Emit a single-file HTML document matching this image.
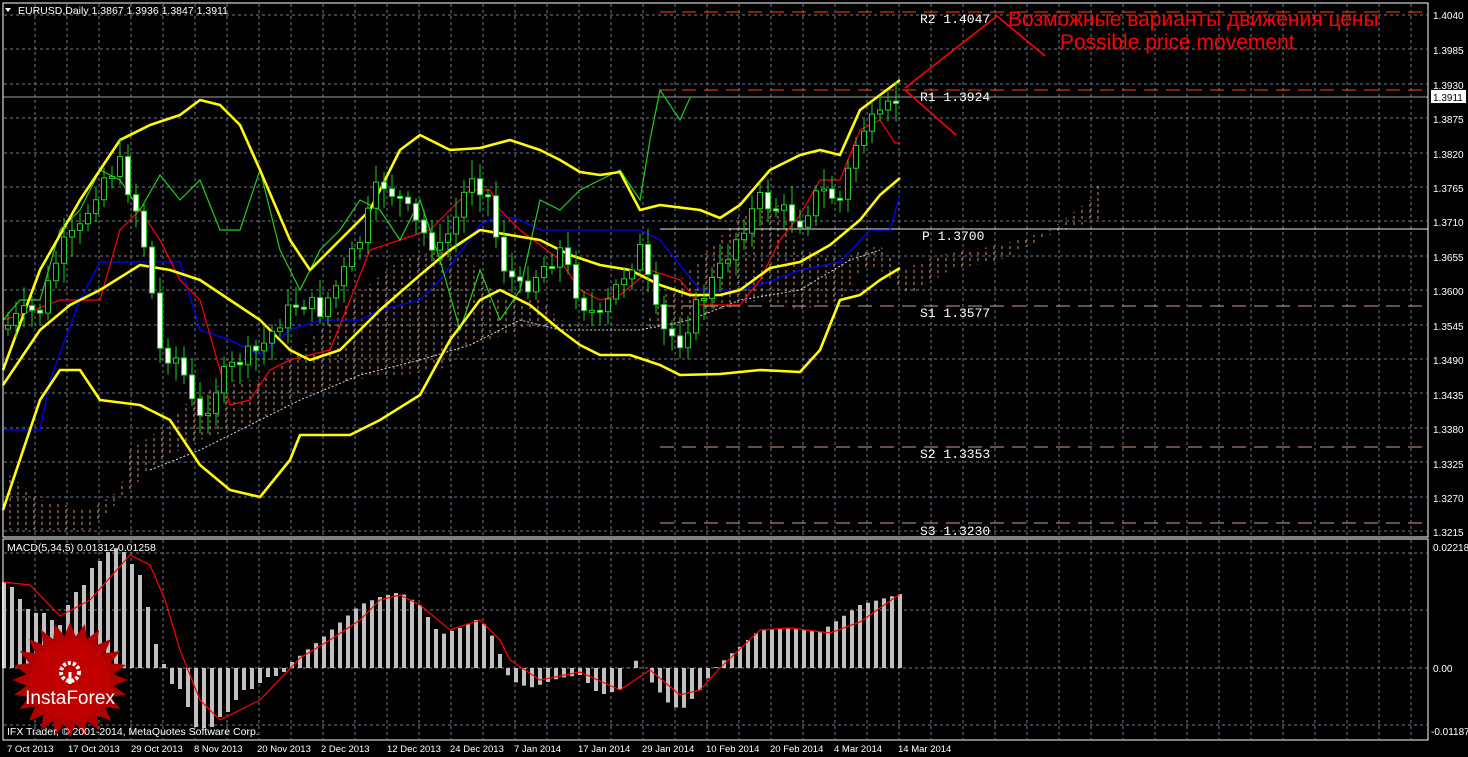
<!DOCTYPE html>
<html><head><meta charset="utf-8"><style>
html,body{margin:0;padding:0;background:#000;}
body{width:1468px;height:757px;overflow:hidden;position:relative;font-family:"Liberation Sans","Noto Sans CJK SC",sans-serif;}
svg{position:absolute;left:0;top:0;}
</style></head><body>
<svg id="s" width="1468" height="757" viewBox="0 0 1468 757" xmlns="http://www.w3.org/2000/svg">
<defs>
<pattern id="hatch" width="8" height="6" patternUnits="userSpaceOnUse">
<line x1="2" y1="0" x2="2" y2="3" stroke="#f4a460" stroke-width="1"/>
</pattern>
</defs>
<rect width="1468" height="757" fill="#000"/>
<g id="grid" stroke="#6e7b8b" stroke-width="1" stroke-dasharray="3,3" fill="none"></g>
<polygon points="3,470 40,500 90,510 120,490 130,450 160,430 190,400 230,380 260,380 300,350 350,300 400,260 440,250 470,260 500,300 540,300 560,320 600,330 640,330 660,300 700,260 740,215 780,205 800,250 840,258 880,245 900,270 940,255 1000,245 1050,230 1090,200 1105,170 1100,220 1060,230 1000,260 950,270 910,295 880,270 860,270 840,300 800,310 760,300 720,310 690,320 660,330 630,330 600,330 560,330 520,330 470,345 440,370 400,375 350,380 300,395 260,420 200,440 160,460 120,500 90,530 40,530 3,530" fill="url(#hatch)" opacity="0.9"/>
<polyline points="150,470 200,450 260,420 300,400 360,375 420,360 470,345 520,320 560,330 640,330 690,320 740,300 800,290 850,260 880,250" fill="none" stroke="#ddd" stroke-width="1" stroke-dasharray="2,2"/>
<line x1="660" y1="12" x2="1428" y2="12" stroke="#ff4500" stroke-dasharray="14,8"/>
<line x1="660" y1="90" x2="1428" y2="90" stroke="#ff4500" stroke-dasharray="14,8"/>
<line x1="660" y1="306" x2="1428" y2="306" stroke="#d2a08c" stroke-dasharray="14,8"/>
<line x1="660" y1="447" x2="1428" y2="447" stroke="#d2a08c" stroke-dasharray="14,8"/>
<line x1="660" y1="523" x2="1428" y2="523" stroke="#d2a08c" stroke-dasharray="14,8"/>
<line x1="660" y1="229" x2="1428" y2="229" stroke="#e8e8e8"/>
<line x1="3" y1="97" x2="1428" y2="97" stroke="#a0a0a0"/>
<polyline points="3,430 40,430 50,380 80,300 100,262 140,262 180,262 200,330 230,340 260,355 290,330 320,320 360,320 380,310 420,300 440,280 480,225 500,215 520,220 540,230 580,230 620,230 640,230 660,240 700,290 720,290 740,290 760,285 800,270 840,262 870,230 890,230 900,195" fill="none" stroke="#0000ff" stroke-width="1.3"/>
<polyline points="3,320 20,315 60,300 100,300 120,230 140,210 160,240 180,280 200,300 230,405 250,400 270,370 290,360 330,350 350,300 370,250 400,240 430,230 460,200 470,190 490,190 500,210 520,230 540,245 560,260 580,290 600,300 620,295 650,270 680,280 700,305 720,305 740,305 760,280 780,240 800,215 820,180 840,180 860,130 880,120 895,143 900,143" fill="none" stroke="#ff0000" stroke-width="1.2"/>
<polyline points="3,320 20,300 40,300 60,230 80,210 100,170 120,180 140,210 160,175 180,200 200,180 220,230 240,230 260,170 280,250 300,290 320,250 340,230 360,200 380,210 400,240 420,200 440,260 460,330 480,270 500,320 520,290 540,200 560,210 580,190 600,180 620,170 640,200 650,140 660,90 680,120 690,98" fill="none" stroke="#22cc22" stroke-width="1.2"/>
<g fill="none" stroke="#ffff00" stroke-width="2.6" stroke-linejoin="round">
<polyline points="3,370 40,270 80,200 120,140 150,125 180,115 200,100 220,105 240,125 260,170 290,240 310,270 330,250 370,210 400,150 420,135 450,150 480,148 510,140 540,150 560,160 580,172 600,175 620,172 640,210 660,205 700,210 720,218 740,205 770,170 800,155 820,150 840,155 860,110 880,95 900,80"/>
<polyline points="3,385 40,330 70,305 100,290 140,265 170,270 200,280 230,300 260,320 290,350 310,360 340,350 380,310 420,275 450,250 480,230 510,235 540,240 570,255 600,265 630,270 660,285 690,295 720,295 740,290 770,268 800,262 830,245 860,220 880,195 900,178"/>
<polyline points="3,510 40,400 60,370 80,370 100,400 140,405 170,420 200,465 230,490 260,497 290,460 300,435 350,435 380,420 420,395 450,340 480,300 500,290 530,305 560,330 580,345 600,355 630,355 660,365 680,375 720,374 760,370 800,372 820,350 840,300 860,295 880,280 900,268"/>
</g>
<g id="candles"></g>
<g stroke="#ff0000" stroke-width="1.6" fill="none">
<polyline points="905,88 997,16 1045,56"/>
<line x1="905" y1="90" x2="956" y2="135"/>
</g>
<text x="1008" y="26" fill="#ff0000" font-size="21">Возможные варианты движения цены</text>
<text x="1060" y="49" fill="#ff0000" font-size="21">Possible price movement</text>
<g fill="#ffffff" font-family="Liberation Mono,monospace" font-size="13">
<text x="920" y="23">R2 1.4047</text>
<text x="920" y="101">R1 1.3924</text>
<text x="922" y="240">P 1.3700</text>
<text x="920" y="317">S1 1.3577</text>
<text x="920" y="458">S2 1.3353</text>
<text x="920" y="535">S3 1.3230</text>
</g>
<line x1="3" y1="668" x2="1428" y2="668" stroke="#6e7b8b" stroke-dasharray="3,3"/>
<path id="hist" stroke="#c0c0c0" stroke-width="4" fill="none" d=""/>
<polyline points="3,582 30,585 60,616 90,600 130,555 150,565 165,600 180,650 200,700 220,720 260,700 300,658 330,640 360,620 380,600 400,595 420,605 450,630 480,620 500,640 510,660 540,680 580,672 620,690 650,670 680,695 700,690 720,668 760,630 790,628 830,633 860,622 900,594" fill="none" stroke="#ff0000" stroke-width="1.2"/>
<g transform="translate(70,680)">
<polygon id="star" fill="#b00000" points=""/>
<circle r="40" fill="#c00000"/>
<text x="0" y="24" fill="#fff" font-size="19" text-anchor="middle">InstaForex</text>
<circle cx="0" cy="-8" r="9" fill="none" stroke="#fff" stroke-width="4" stroke-dasharray="3,2"/>
<line x1="0" y1="-8" x2="0" y2="4" stroke="#fff" stroke-width="3"/>
</g>
<rect x="3" y="3" width="1425" height="534" fill="none" stroke="#fff" stroke-width="1"/>
<rect x="3" y="539" width="1425" height="201" fill="none" stroke="#fff" stroke-width="1"/>
<g fill="#fff" font-size="10.5">
<text x="18" y="14">EURUSD,Daily  1.3867 1.3936 1.3847 1.3911</text>
<text x="7" y="551">MACD(5,34,5) 0.01312 0.01258</text>
<text x="7" y="735">IFX Trader, © 2001-2014, MetaQuotes Software Corp.</text>
</g>
<polygon points="5,8 11,8 8,12" fill="#fff"/>
<g fill="#fff" font-size="10">
<text x="1433" y="19">1.4040</text><text x="1433" y="54">1.3985</text><text x="1433" y="89">1.3930</text>
<text x="1433" y="123">1.3875</text><text x="1433" y="158">1.3820</text><text x="1433" y="192">1.3765</text>
<text x="1433" y="226">1.3710</text><text x="1433" y="261">1.3655</text><text x="1433" y="295">1.3600</text>
<text x="1433" y="330">1.3545</text><text x="1433" y="364">1.3490</text><text x="1433" y="399">1.3435</text>
<text x="1433" y="433">1.3380</text><text x="1433" y="468">1.3325</text><text x="1433" y="502">1.3270</text>
<text x="1433" y="536">1.3215</text>
<text x="1433" y="551">0.02218</text><text x="1433" y="672">0.00</text><text x="1431" y="735">-0.01187</text>
</g>
<rect x="1431" y="90" width="35" height="13" fill="#fff"/>
<text x="1433" y="101" fill="#000" font-size="10">1.3911</text>
<g fill="#fff" font-size="9.5">
<text x="7" y="752">7 Oct 2013</text><text x="68" y="752">17 Oct 2013</text><text x="131" y="752">29 Oct 2013</text>
<text x="194" y="752">8 Nov 2013</text><text x="257" y="752">20 Nov 2013</text><text x="321" y="752">2 Dec 2013</text>
<text x="387" y="752">12 Dec 2013</text><text x="450" y="752">24 Dec 2013</text><text x="514" y="752">7 Jan 2014</text>
<text x="578" y="752">17 Jan 2014</text><text x="642" y="752">29 Jan 2014</text><text x="706" y="752">10 Feb 2014</text>
<text x="770" y="752">20 Feb 2014</text><text x="834" y="752">4 Mar 2014</text><text x="898" y="752">14 Mar 2014</text>
</g>
</svg>
<script>
(function(){
var NS="http://www.w3.org/2000/svg";
var g=document.getElementById('grid');
function L(x1,y1,x2,y2){var l=document.createElementNS(NS,'line');l.setAttribute('x1',x1);l.setAttribute('y1',y1);l.setAttribute('x2',x2);l.setAttribute('y2',y2);g.appendChild(l);}
for(var x=35;x<1428;x+=32){L(x,4,x,536);L(x,540,x,739);}
for(var i=0;i<16;i++){var y=Math.round(15+i*34.4);L(4,y,1427,y);}
L(4,553,1427,553);L(4,610,1427,610);L(4,725,1427,725);
var P=[[3,330],[20,315],[40,310],[60,250],[80,230],[100,180],[120,165],[140,220],[150,280],[160,350],[180,360],[190,400],[200,420],[220,380],[240,360],[260,350],[280,320],[300,300],[320,310],[340,280],[360,240],[380,180],[400,200],[420,230],[440,250],[460,210],[470,170],[490,200],[500,260],[520,290],[540,270],[560,250],[580,300],[600,320],[620,280],[640,250],[660,330],[680,340],[700,300],[720,270],[740,230],[760,200],[780,210],[800,220],[820,190],[840,200],[860,130],[880,120],[895,100]];
function f(x){for(var i=1;i<P.length;i++){if(x<=P[i][0]){var a=P[i-1],b=P[i];return a[1]+(b[1]-a[1])*(x-a[0])/(b[0]-a[0]);}}return 100;}
var c=document.getElementById('candles');var seed=7;function r(){seed=(seed*9301+49297)%233280;return seed/233280;}
var prev=f(4);
for(var x=8;x<=896;x+=8){var cl=f(x)+(r()-0.5)*20;var o=prev;var top=Math.min(o,cl),bot=Math.max(o,cl);if(bot-top<2)bot=top+2;
var w=document.createElementNS(NS,'line');w.setAttribute('x1',x);w.setAttribute('x2',x);w.setAttribute('y1',top-5-r()*15);w.setAttribute('y2',bot+5+r()*15);w.setAttribute('stroke','#22cc22');c.appendChild(w);
var b=document.createElementNS(NS,'rect');b.setAttribute('x',x-2.5);b.setAttribute('y',top);b.setAttribute('width',5);b.setAttribute('height',bot-top);b.setAttribute('fill',cl>o?'#fff':'#000');b.setAttribute('stroke','#22cc22');c.appendChild(b);prev=cl;}
var H=[[4,582],[12,587],[20,599],[28,609],[36,613],[44,613],[52,620],[60,625],[68,605],[76,592],[84,585],[92,568],[100,561],[108,552],[116,548],[124,552],[132,564],[140,575],[148,607],[156,644],[164,664],[172,684],[180,689],[188,707],[196,727],[204,728],[212,727],[220,717],[228,712],[236,700],[244,690],[252,689],[260,683],[268,677],[276,676],[284,672],[292,662],[320,640],[360,605],[380,597],[400,592],[420,605],[440,635],[460,628],[480,618],[495,640],[505,668],[510,680],[530,688],[560,678],[580,675],[600,695],[620,690],[630,662],[640,660],[650,680],[670,705],[682,710],[700,690],[715,668],[730,655],[760,630],[790,628],[820,632],[860,605],[900,594]];
function h(x){for(var i=1;i<H.length;i++){if(x<=H[i][0]){var a=H[i-1],b=H[i];return a[1]+(b[1]-a[1])*(x-a[0])/(b[0]-a[0]);}}return 594;}
var d='';for(var x=4;x<=900;x+=8){d+='M'+x+' 668V'+h(x).toFixed(1);}
document.getElementById('hist').setAttribute('d',d);
var pts='';for(var i=0;i<48;i++){var a=i*Math.PI/24,R=i%2?44:58;pts+=(R*Math.sin(a)).toFixed(1)+','+(-R*Math.cos(a)).toFixed(1)+' ';}
document.getElementById('star').setAttribute('points',pts);
})();
</script>
</body></html>
